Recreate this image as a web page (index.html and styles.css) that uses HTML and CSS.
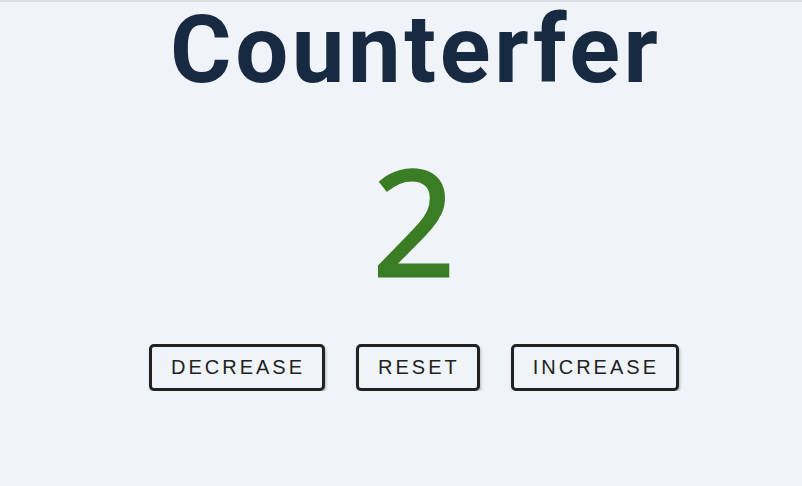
FILE: index.html
```html
<!DOCTYPE html>
<html lang="en">
<head>
<meta charset="utf-8">
<title>Counter</title>
<link rel="stylesheet" href="styles.css">
</head>
<body>
<main class="app">
  <h1 class="title">Counterfer</h1>
  <div class="value">2</div>
  <div class="controls">
    <button class="btn">decrease</button>
    <button class="btn">reset</button>
    <button class="btn">increase</button>
  </div>
</main>
</body>
</html>
```
FILE: styles.css
```css
html, body {
  margin: 0;
  padding: 0;
  background: #f0f4f8;
}
body {
  border-top: 2px solid #dcdfe3;
  font-family: "Liberation Sans", Arial, sans-serif;
}
.app {
  display: flex;
  flex-direction: column;
  align-items: center;
  padding-left: 26px;
}
.title {
  margin: 0;
  padding-left: 3.6px;
  font-family: Roboto, "Liberation Sans", sans-serif;
  font-weight: 700;
  font-size: 94px;
  line-height: 96px;
  letter-spacing: 3.6px;
  color: #182a42;
}
.value {
  margin-top: 49px;
  font-family: "Open Sans", "Noto Sans", sans-serif;
  font-weight: 400;
  font-size: 146px;
  line-height: 1;
  color: #3a7d25;
  -webkit-text-stroke: 3px #3a7d25;
}
.controls {
  margin-top: 51px;
  display: flex;
  gap: 31px;
}
.btn {
  font-family: "Liberation Sans", Arial, sans-serif;
  font-size: 20px;
  line-height: 23px;
  letter-spacing: 3px;
  text-transform: uppercase;
  color: #222;
  background: #f0f4f8;
  border: 3px solid #222;
  border-radius: 5px;
  padding: 9px 17px 9px 19px;
  box-shadow: 1px 2px 3px rgba(0,0,0,0.25);
  cursor: pointer;
}
```
